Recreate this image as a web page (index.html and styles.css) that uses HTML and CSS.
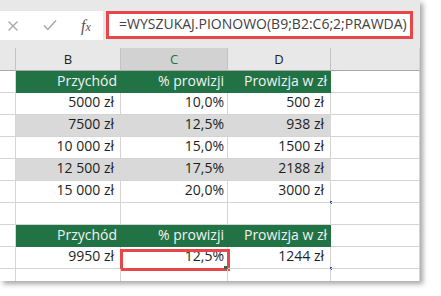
FILE: index.html
```html
<!DOCTYPE html>
<html lang="pl">
<head>
<meta charset="utf-8">
<link rel="stylesheet" href="styles.css">
</head>
<body>
<div class="window">
  <div class="topstrip"></div>
  <div class="fbar">
    <div class="fbtns">
      <svg class="ico-x" width="12" height="12" viewBox="0 0 12 12"><path d="M1.5 1.5L10.5 10.5M10.5 1.5L1.5 10.5" stroke="#a8a8a8" stroke-width="1.4" fill="none"/></svg>
      <svg class="ico-ok" width="14" height="12" viewBox="0 0 14 12"><path d="M1 6.5L4.8 10.5L13 1.5" stroke="#a8a8a8" stroke-width="1.5" fill="none"/></svg>
      <span class="fx"><span class="fx-f">f</span><span class="fx-x">x</span></span>
    </div>
    <div class="formula">=WYSZUKAJ.PIONOWO(B9;B2:C6;2;PRAWDA)</div>
  </div>
  <div class="sheet">
    <div class="row colhead">
      <div class="c"></div>
      <div class="c">B</div>
      <div class="c sel">C</div>
      <div class="c">D</div>
      <div class="c"></div>
    </div>
    <div class="row green">
      <div class="c rn"></div>
      <div class="c h">Przychód</div>
      <div class="c h">% prowizji</div>
      <div class="c h">Prowizja w zł</div>
      <div class="c e"></div>
    </div>
    <div class="row">
      <div class="c rn"></div>
      <div class="c cur">5000 zł</div>
      <div class="c pct">10,0%</div>
      <div class="c cur">500 zł</div>
      <div class="c e"></div>
    </div>
    <div class="row band">
      <div class="c rn"></div>
      <div class="c cur">7500 zł</div>
      <div class="c pct">12,5%</div>
      <div class="c cur">938 zł</div>
      <div class="c e"></div>
    </div>
    <div class="row">
      <div class="c rn"></div>
      <div class="c cur">10 000 zł</div>
      <div class="c pct">15,0%</div>
      <div class="c cur">1500 zł</div>
      <div class="c e"></div>
    </div>
    <div class="row band">
      <div class="c rn"></div>
      <div class="c cur">12 500 zł</div>
      <div class="c pct">17,5%</div>
      <div class="c cur">2188 zł</div>
      <div class="c e"></div>
    </div>
    <div class="row">
      <div class="c rn"></div>
      <div class="c cur">15 000 zł</div>
      <div class="c pct">20,0%</div>
      <div class="c cur handle-blue">3000 zł</div>
      <div class="c e"></div>
    </div>
    <div class="row">
      <div class="c rn"></div>
      <div class="c"></div>
      <div class="c"></div>
      <div class="c"></div>
      <div class="c e"></div>
    </div>
    <div class="row green">
      <div class="c rn"></div>
      <div class="c h">Przychód</div>
      <div class="c h">% prowizji</div>
      <div class="c h">Prowizja w zł</div>
      <div class="c e"></div>
    </div>
    <div class="row">
      <div class="c rn"></div>
      <div class="c cur">9950 zł</div>
      <div class="c pct active">12,5%</div>
      <div class="c cur handle-blue">1244 zł</div>
      <div class="c e"></div>
    </div>
    <div class="row last">
      <div class="c rn"></div>
      <div class="c"></div>
      <div class="c"></div>
      <div class="c"></div>
      <div class="c e"></div>
    </div>
  </div>
</div>
</body>
</html>
```
FILE: styles.css
```css
* { box-sizing: border-box; }
html, body { margin: 0; padding: 0; background: #ffffff; }
body { width: 441px; height: 296px; overflow: hidden; font-family: "Open Sans", "Noto Sans", sans-serif; }

.window {
  width: 420px;
  height: 281px;
  background: #e8e8e8;
  box-shadow: 3px 3px 5px rgba(0, 0, 0, 0.35);
  overflow: hidden;
}

.topstrip { height: 11px; }

.fbar {
  height: 29px;
  display: flex;
  gap: 3px;
  align-items: flex-start;
}

.fbtns {
  width: 103px;
  height: 29px;
  background: #ffffff;
  display: flex;
  align-items: center;
  padding-left: 7px;
}
.ico-x { margin-right: 24px; }
.ico-ok { margin-right: 24px; margin-top: -1px; }
.fx {
  font-family: "Liberation Serif", serif;
  font-style: italic;
  color: #555555;
  line-height: 1;
  display: flex;
  align-items: baseline;
}
.fx-f { font-size: 16px; }
.fx-x { font-size: 12px; }

.formula {
  width: 307px;
  height: 28px;
  background: #ffffff;
  border: 3px solid #e8474a;
  padding-left: 10px;
  font-size: 14px;
  line-height: 19px;
  color: #444040;
  white-space: nowrap;
  overflow: hidden;
}

.sheet { margin-top: 8px; background: #ffffff; }

.row {
  display: grid;
  grid-template-columns: 16px 105px 107px 103px 89px;
  height: 22px;
}

.c {
  border-right: 1px solid #d4d4d4;
  border-bottom: 1px solid #d4d4d4;
  font-size: 14px;
  line-height: 18px;
  color: #1e1e1e;
  text-align: right;
  white-space: nowrap;
  position: relative;
}

.colhead { height: 23px; background: #e8e8e8; }
.colhead .c {
  border-right-color: #c3c3c3;
  border-bottom-color: #a9a9a9;
  text-align: center;
  font-size: 13px;
  line-height: 22px;
  color: #222222;
}
.colhead .c:last-child { border-right-color: #d4d4d4; }
.colhead .sel { background: #d2d2d2; color: #217346; }

.green .c.h {
  background: #217346;
  border-right-color: #217346;
  border-bottom-color: #217346;
  color: #f2f2f2;
  line-height: 20px;
  padding-right: 3px;
}

.band .c.cur, .band .c.pct {
  background: #d9d9d9;
  border-right-color: #d9d9d9;
}

.cur { padding-right: 6px; }
.pct { padding-right: 3px; }

.last { height: 12px; }
.last .c { border-bottom: none; }

.active::after {
  content: "";
  position: absolute;
  left: -1px;
  top: 2px;
  right: -3px;
  bottom: -3px;
  border: 3px solid #e8474a;
}
.active::before {
  content: "";
  position: absolute;
  right: 0px;
  bottom: -1px;
  width: 3px;
  height: 3px;
  background: #217346;
  z-index: 2;
}

.handle-blue::after {
  content: "";
  position: absolute;
  right: -2px;
  bottom: -2px;
  width: 2px;
  height: 3px;
  background: #3b4fb0;
}
```
